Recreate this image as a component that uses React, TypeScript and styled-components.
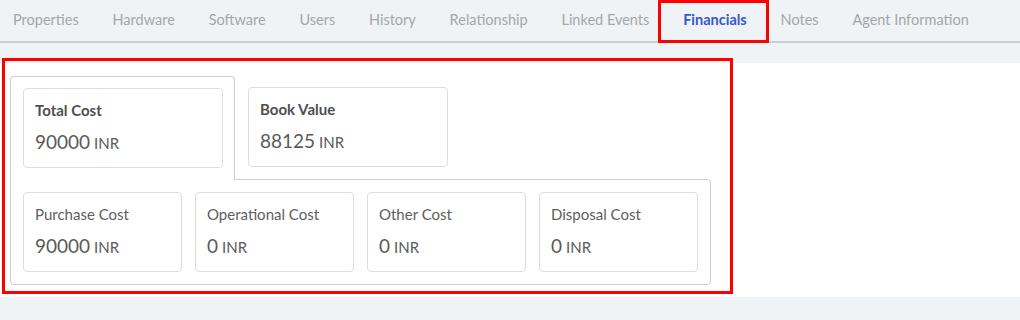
import React from "react";
import styled, { createGlobalStyle } from "styled-components";

interface ICost {
  label: string;
  amount: number;
}

const GlobalStyle = createGlobalStyle`
  html, body {
    margin: 0;
    padding: 0;
    background: #eff3f6;
  }
  body {
    font-family: Lato, "Open Sans", "Liberation Sans", sans-serif;
  }
  * {
    box-sizing: border-box;
  }
`;

const Page = styled.div`
  width: 1020px;
  height: 320px;
  overflow: hidden;
  background: #eff3f6;
`;

const TabBar = styled.nav`
  display: flex;
  height: 43px;
  padding-left: 13px;
  gap: 33.8px;
  border-bottom: 2px solid #c9ced1;
`;

const Tab = styled.div<{ $active?: boolean; $marked?: boolean }>`
  position: relative;
  display: flex;
  align-items: center;
  padding-bottom: 3px;
  font-size: 14.5px;
  white-space: nowrap;
  color: ${(props) => (props.$active ? "#3558d0" : "#a4a7aa")};
  font-weight: ${(props) => (props.$active ? 700 : 400)};
  //빨간 표시 박스
  ${(props) =>
    props.$marked &&
    `
    &::after {
      content: "";
      position: absolute;
      left: -25px;
      right: -22px;
      top: 0;
      bottom: -2px;
      border: 3px solid #ff0000;
    }
  `}
`;

const Panel = styled.div`
  margin-top: 20px;
  height: 234px;
  background: #fff;
  padding-top: 1px;
`;

const Marker = styled.div`
  width: 731px;
  height: 236px;
  margin: -6px 0 0 2px;
  padding: 15px 0 0 5px;
  border: 3px solid #ff0000;
`;

const Group = styled.div`
  width: 701px;
  display: flex;
  flex-direction: column;
`;

const TopRow = styled.div`
  display: flex;
  align-items: flex-start;
`;

const TabBox = styled.div`
  position: relative;
  z-index: 1;
  width: 225px;
  padding: 11px 12px 12px;
  margin-bottom: -1px;
  background: #fff;
  border: 1px solid #cfcfcf;
  border-bottom: none;
  border-radius: 4px 4px 0 0;
`;

const Card = styled.div<{ $width: number; $offset?: number }>`
  width: ${(props) => props.$width}px;
  height: 80px;
  margin: ${(props) => (props.$offset ? `${props.$offset}px 0 0 13px` : "0")};
  padding: 12px 11px 0;
  background: #fff;
  border: 1px solid #dedede;
  border-radius: 4px;
  color: #555;
`;

const Label = styled.div<{ $bold?: boolean }>`
  font-size: 15px;
  line-height: 18px;
  font-weight: ${(props) => (props.$bold ? 700 : 400)};
  color: ${(props) => (props.$bold ? "#4f4f4f" : "#5e5e5e")};
`;

const Value = styled.div`
  margin-top: 11px;
  font-size: 19px;
  line-height: 24px;
  color: #5a5a5a;
  span {
    font-size: 15px;
    margin-left: 4px;
  }
`;

const BottomPanel = styled.div`
  display: flex;
  gap: 13px;
  padding: 12px;
  border: 1px solid #cfcfcf;
  border-radius: 0 4px 4px 4px;
`;

const tabs = [
  "Properties",
  "Hardware",
  "Software",
  "Users",
  "History",
  "Relationship",
  "Linked Events",
  "Financials",
  "Notes",
  "Agent Information",
];

const costs: ICost[] = [
  { label: "Purchase Cost", amount: 90000 },
  { label: "Operational Cost", amount: 0 },
  { label: "Other Cost", amount: 0 },
  { label: "Disposal Cost", amount: 0 },
];

function CostCard({ label, amount, bold, width, offset }: ICost & { bold?: boolean; width: number; offset?: number }) {
  return (
    <Card $width={width} $offset={offset}>
      <Label $bold={bold}>{label}</Label>
      <Value>
        {amount}
        <span>INR</span>
      </Value>
    </Card>
  );
}

function App() {
  return (
    <>
      <GlobalStyle />
      <Page>
        <TabBar>
          {tabs.map((t) => (
            <Tab key={t} $active={t === "Financials"} $marked={t === "Financials"}>
              {t}
            </Tab>
          ))}
        </TabBar>
        <Panel>
          <Marker>
            <Group>
              <TopRow>
                <TabBox>
                  <CostCard label="Total Cost" amount={90000} bold width={200} />
                </TabBox>
                <CostCard label="Book Value" amount={88125} bold width={200} offset={11} />
              </TopRow>
              <BottomPanel>
                {costs.map((c) => (
                  <CostCard key={c.label} label={c.label} amount={c.amount} width={159} />
                ))}
              </BottomPanel>
            </Group>
          </Marker>
        </Panel>
      </Page>
    </>
  );
}

export default App;
